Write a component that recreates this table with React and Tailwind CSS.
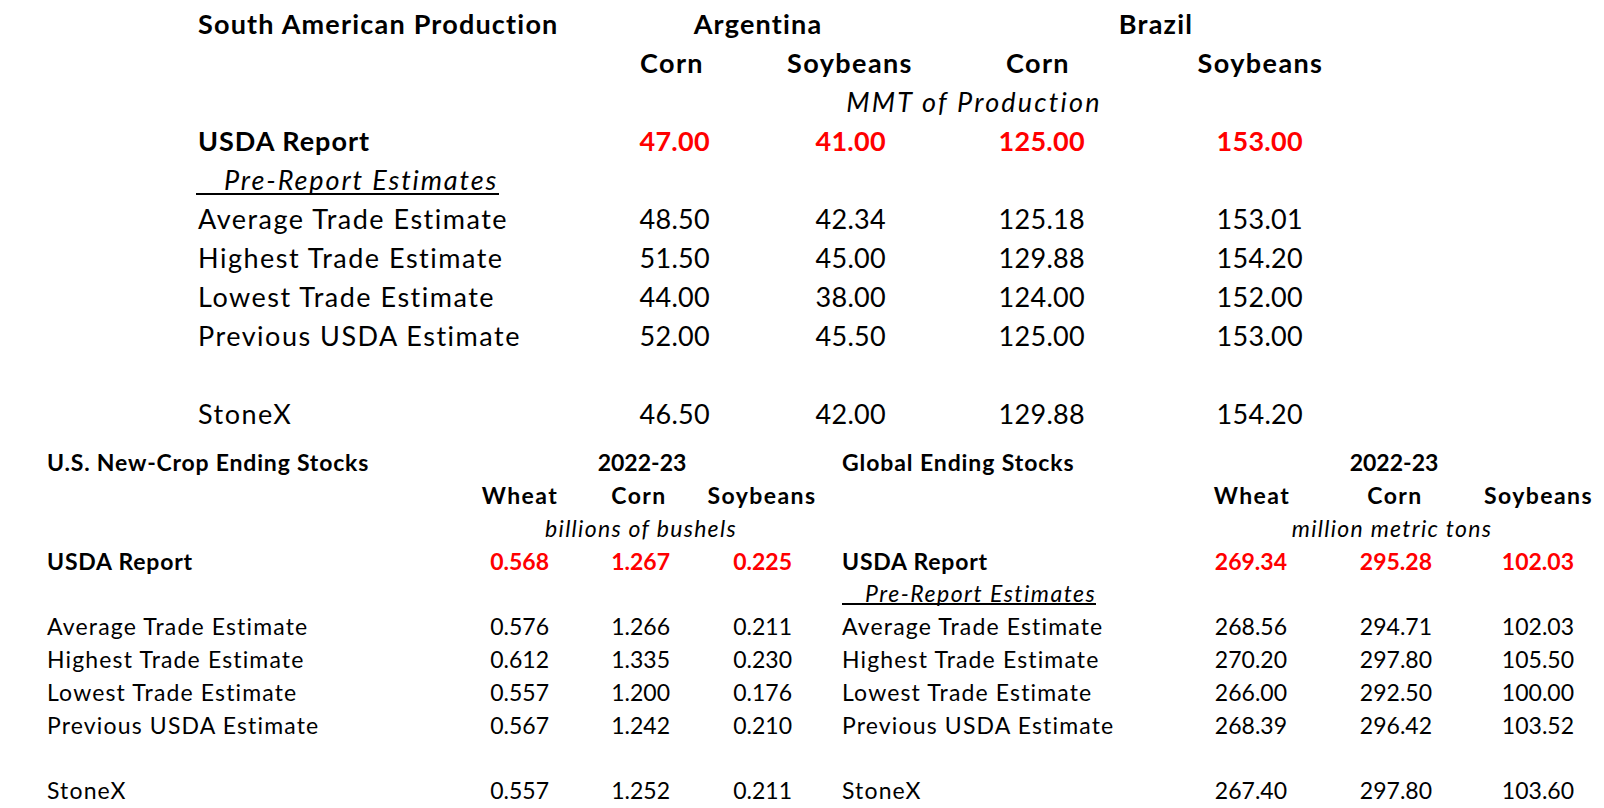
const font = { fontFamily: "Lato, 'Noto Sans', sans-serif" }

const topRows = [
  { label: "Average Trade Estimate", v: ["48.50", "42.34", "125.18", "153.01"] },
  { label: "Highest Trade Estimate", v: ["51.50", "45.00", "129.88", "154.20"] },
  { label: "Lowest Trade Estimate", v: ["44.00", "38.00", "124.00", "152.00"] },
  { label: "Previous USDA Estimate", v: ["52.00", "45.50", "125.00", "153.00"] },
]

const usRows = [
  { label: "Average Trade Estimate", us: ["0.576", "1.266", "0.211"], gl: ["268.56", "294.71", "102.03"] },
  { label: "Highest Trade Estimate", us: ["0.612", "1.335", "0.230"], gl: ["270.20", "297.80", "105.50"] },
  { label: "Lowest Trade Estimate", us: ["0.557", "1.200", "0.176"], gl: ["266.00", "292.50", "100.00"] },
  { label: "Previous USDA Estimate", us: ["0.567", "1.242", "0.210"], gl: ["268.39", "296.42", "103.52"] },
]

// right padding per column so numbers line up on their right edge
const topPad = ["pr-[14px]", "pr-[90px]", "pr-[15px]", "pr-[122px]"]
const usPad = ["pr-[31px]", "pr-[28px]", "pr-[36px]"]
const glPad = ["pr-[27px]", "pr-[44px]", "pr-[27px]"]

function TopTable() {
  return (
    <div className="ml-[198px] pt-[5px] grid grid-cols-[422px_104px_252px_124px_325px] auto-rows-[39px] items-center text-[27px] text-black">
      {/* Header rows */}
      <div className="font-bold tracking-[1.2px]">South American Production</div>
      <div className="col-span-2 text-center pr-[80px] font-bold tracking-[1.2px]">Argentina</div>
      <div className="col-span-2 text-center pr-[89px] font-bold tracking-[1.2px]">Brazil</div>

      <div></div>
      <div className="text-center font-bold tracking-[1.4px]">Corn</div>
      <div className="text-center font-bold tracking-[1.4px]">Soybeans</div>
      <div className="text-center font-bold tracking-[1.4px]">Corn</div>
      <div className="text-center pr-[4px] font-bold tracking-[1.4px]">Soybeans</div>

      <div></div>
      <div className="col-span-4 text-center pr-[97px] italic tracking-[2.2px]">MMT of Production</div>

      <div className="font-bold tracking-[1px]">USDA Report</div>
      {["47.00", "41.00", "125.00", "153.00"].map((v, i) => (
        <div key={i} className={`text-right font-bold text-[#ff0000] tracking-[0.3px] ${topPad[i]}`}>{v}</div>
      ))}

      <div className="col-span-5">
        <span className="inline-block -ml-[2px] pl-[28px] pr-[1px] italic leading-[26px] border-b-2 border-black tracking-[1.9px]">
          Pre-Report Estimates
        </span>
      </div>

      {topRows.map((r) => (
        <Row5 key={r.label} label={r.label} values={r.v} />
      ))}

      <div className="col-span-5"></div>
      <Row5 label="StoneX" values={["46.50", "42.00", "129.88", "154.20"]} />
    </div>
  )
}

function Row5({ label, values }) {
  return (
    <>
      <div className="tracking-[1.5px]">{label}</div>
      {values.map((v, i) => (
        <div key={i} className={`text-right tracking-[0.3px] ${topPad[i]}`}>{v}</div>
      ))}
    </>
  )
}

function BottomTable() {
  return (
    <div className="ml-[47px] mt-[12px] grid grid-cols-[415px_118px_118px_130px_362px_124px_162px_125px] auto-rows-[32.8px] items-center text-[23px] text-black">
      <div className="font-bold tracking-[0.8px]">U.S. New-Crop Ending Stocks</div>
      <div className="col-span-3 text-center pr-[6px] font-bold">2022-23</div>
      <div className="pl-[14px] font-bold tracking-[0.9px]">Global Ending Stocks</div>
      <div className="col-span-3 text-center pr-[3px] font-bold">2022-23</div>

      <div></div>
      <div className="text-center pr-[2px] font-bold tracking-[1.4px]">Wheat</div>
      <div className="text-center font-bold tracking-[1.4px]">Corn</div>
      <div className="text-center pr-[2px] font-bold tracking-[1.4px]">Soybeans</div>
      <div></div>
      <div className="text-center font-bold tracking-[1.4px]">Wheat</div>
      <div className="text-center font-bold tracking-[1.4px]">Corn</div>
      <div className="text-center font-bold tracking-[1.4px]">Soybeans</div>

      <div></div>
      <div className="col-span-3 text-center pr-[8px] italic tracking-[1.3px]">billions of bushels</div>
      <div></div>
      <div className="col-span-3 text-center pr-[7px] italic tracking-[1.3px]">million metric tons</div>

      <div className="font-bold tracking-[0.8px]">USDA Report</div>
      {["0.568", "1.267", "0.225"].map((v, i) => (
        <div key={i} className={`text-right font-bold text-[#ff0000] ${usPad[i]}`}>{v}</div>
      ))}
      <div className="pl-[14px] font-bold tracking-[0.8px]">USDA Report</div>
      {["269.34", "295.28", "102.03"].map((v, i) => (
        <div key={i} className={`text-right font-bold text-[#ff0000] ${glPad[i]}`}>{v}</div>
      ))}

      <div className="col-span-4"></div>
      <div className="col-span-4 pl-[14px]">
        <span className="inline-block pl-[23px] italic leading-[20px] border-b-2 border-black tracking-[1.5px]">
          Pre-Report Estimates
        </span>
      </div>

      {usRows.map((r) => (
        <Row8 key={r.label} {...r} />
      ))}

      <div className="col-span-8"></div>
      <Row8 label="StoneX" us={["0.557", "1.252", "0.211"]} gl={["267.40", "297.80", "103.60"]} />
    </div>
  )
}

function Row8({ label, us, gl }) {
  return (
    <>
      <div className="tracking-[1.15px]">{label}</div>
      {us.map((v, i) => (
        <div key={i} className={`text-right ${usPad[i]}`}>{v}</div>
      ))}
      <div className="pl-[14px] tracking-[1.15px]">{label}</div>
      {gl.map((v, i) => (
        <div key={i} className={`text-right ${glPad[i]}`}>{v}</div>
      ))}
    </>
  )
}

export default function App() {
  return (
    <div className="w-[1604px] h-[808px] bg-white overflow-hidden" style={font}>
      <TopTable />
      <BottomTable />
    </div>
  )
}
